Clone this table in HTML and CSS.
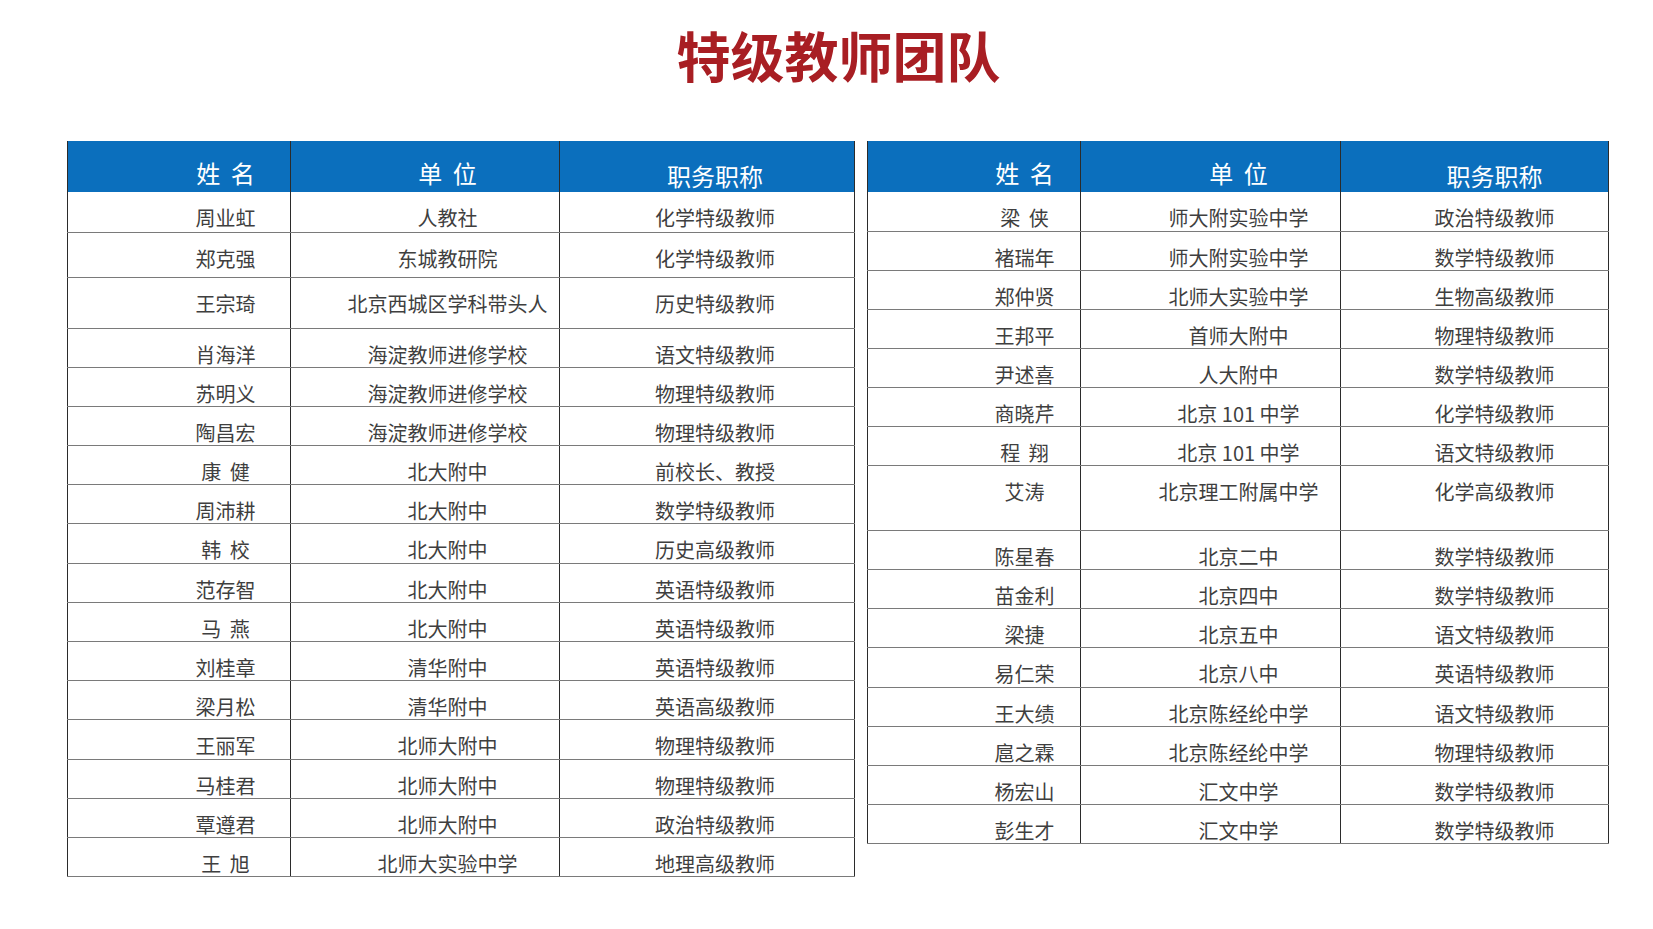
FILE: index.html
```html
<!DOCTYPE html>
<html lang="zh-CN">
<head>
<meta charset="utf-8">
<title>特级教师团队</title>
<link rel="stylesheet" href="styles.css">
</head>
<body>
<header class="title-wrap">
  <h1 class="title">特级教师团队</h1>
</header>
<main class="tables">
  <table class="team team-left">
    <colgroup><col class="w1"><col class="w2"><col class="w3"></colgroup>
    <thead>
      <tr><th class="c1">姓 名</th><th class="c2">单 位</th><th class="c3 hd-title">职务职称</th></tr>
    </thead>
    <tbody>
      <tr class="r40"><td class="c1">周业虹</td><td class="c2">人教社</td><td class="c3">化学特级教师</td></tr>
      <tr class="r45"><td class="c1">郑克强</td><td class="c2">东城教研院</td><td class="c3">化学特级教师</td></tr>
      <tr class="r51"><td class="c1">王宗琦</td><td class="c2">北京西城区学科带头人</td><td class="c3">历史特级教师</td></tr>
      <tr><td class="c1">肖海洋</td><td class="c2">海淀教师进修学校</td><td class="c3">语文特级教师</td></tr>
      <tr><td class="c1">苏明义</td><td class="c2">海淀教师进修学校</td><td class="c3">物理特级教师</td></tr>
      <tr><td class="c1">陶昌宏</td><td class="c2">海淀教师进修学校</td><td class="c3">物理特级教师</td></tr>
      <tr><td class="c1">康 健</td><td class="c2">北大附中</td><td class="c3">前校长、教授</td></tr>
      <tr><td class="c1">周沛耕</td><td class="c2">北大附中</td><td class="c3">数学特级教师</td></tr>
      <tr><td class="c1">韩 校</td><td class="c2">北大附中</td><td class="c3">历史高级教师</td></tr>
      <tr><td class="c1">范存智</td><td class="c2">北大附中</td><td class="c3">英语特级教师</td></tr>
      <tr><td class="c1">马 燕</td><td class="c2">北大附中</td><td class="c3">英语特级教师</td></tr>
      <tr><td class="c1">刘桂章</td><td class="c2">清华附中</td><td class="c3">英语特级教师</td></tr>
      <tr><td class="c1">梁月松</td><td class="c2">清华附中</td><td class="c3">英语高级教师</td></tr>
      <tr><td class="c1">王丽军</td><td class="c2">北师大附中</td><td class="c3">物理特级教师</td></tr>
      <tr><td class="c1">马桂君</td><td class="c2">北师大附中</td><td class="c3">物理特级教师</td></tr>
      <tr><td class="c1">覃遵君</td><td class="c2">北师大附中</td><td class="c3">政治特级教师</td></tr>
      <tr><td class="c1">王 旭</td><td class="c2">北师大实验中学</td><td class="c3">地理高级教师</td></tr>
    </tbody>
  </table>
  <table class="team team-right">
    <colgroup><col class="w1"><col class="w2"><col class="w3"></colgroup>
    <thead>
      <tr><th class="c1">姓 名</th><th class="c2">单 位</th><th class="c3 hd-title">职务职称</th></tr>
    </thead>
    <tbody>
      <tr><td class="c1">梁 侠</td><td class="c2">师大附实验中学</td><td class="c3">政治特级教师</td></tr>
      <tr><td class="c1">褚瑞年</td><td class="c2">师大附实验中学</td><td class="c3">数学特级教师</td></tr>
      <tr><td class="c1">郑仲贤</td><td class="c2">北师大实验中学</td><td class="c3">生物高级教师</td></tr>
      <tr><td class="c1">王邦平</td><td class="c2">首师大附中</td><td class="c3">物理特级教师</td></tr>
      <tr><td class="c1">尹述喜</td><td class="c2">人大附中</td><td class="c3">数学特级教师</td></tr>
      <tr><td class="c1">商晓芹</td><td class="c2 tight">北京 101 中学</td><td class="c3">化学特级教师</td></tr>
      <tr><td class="c1">程 翔</td><td class="c2 tight">北京 101 中学</td><td class="c3">语文特级教师</td></tr>
      <tr class="r65"><td class="c1">艾涛</td><td class="c2">北京理工附属中学</td><td class="c3">化学高级教师</td></tr>
      <tr><td class="c1">陈星春</td><td class="c2">北京二中</td><td class="c3">数学特级教师</td></tr>
      <tr><td class="c1">苗金利</td><td class="c2">北京四中</td><td class="c3">数学特级教师</td></tr>
      <tr><td class="c1">梁捷</td><td class="c2">北京五中</td><td class="c3">语文特级教师</td></tr>
      <tr><td class="c1">易仁荣</td><td class="c2">北京八中</td><td class="c3">英语特级教师</td></tr>
      <tr><td class="c1">王大绩</td><td class="c2">北京陈经纶中学</td><td class="c3">语文特级教师</td></tr>
      <tr><td class="c1">扈之霖</td><td class="c2">北京陈经纶中学</td><td class="c3">物理特级教师</td></tr>
      <tr><td class="c1">杨宏山</td><td class="c2">汇文中学</td><td class="c3">数学特级教师</td></tr>
      <tr><td class="c1">彭生才</td><td class="c2">汇文中学</td><td class="c3">数学特级教师</td></tr>
    </tbody>
  </table>
</main>
</body>
</html>
```

FILE: styles.css
```css
html, body {
  margin: 0;
  padding: 0;
  background: #ffffff;
}

body {
  width: 1653px;
  height: 929px;
  overflow: hidden;
  font-family: "Noto Sans CJK SC", "Noto Sans", sans-serif;
  color: #3f3f3f;
}

.title-wrap {
  display: flex;
  justify-content: center;
  padding: 27px 0 0 24px;
  height: 141px;
  box-sizing: border-box;
}

.title {
  margin: 0;
  font-size: 54px;
  line-height: 56px;
  font-weight: 700;
  color: #a81e23;
}

.tables {
  display: flex;
  align-items: flex-start;
  gap: 12px;
  padding-left: 67px;
}

.team {
  border-collapse: collapse;
  table-layout: fixed;
  border-left: 1px solid #333;
  border-right: 1px solid #555;
}

.team-left { width: 787px; }
.team-right { width: 741px; }

.team-left .w1 { width: 223px; }
.team-left .w2 { width: 269px; }
.team-left .w3 { width: 295px; }

.team-right .w1 { width: 213px; }
.team-right .w2 { width: 260px; }
.team-right .w3 { width: 268px; }

.team th {
  height: 51px;
  box-sizing: border-box;
  background: #0b6fbd;
  color: #ffffff;
  font-size: 24px;
  line-height: 24px;
  font-weight: 400;
  vertical-align: top;
  padding-top: 20px;
  padding-bottom: 0;
  border-left: 1px solid #2b2b2b;
  border-right: 1px solid #2b2b2b;
  word-spacing: 5px;
  white-space: nowrap;
}

.team th.hd-title {
  padding-top: 23px;
}

.team td {
  height: 39.2px;
  box-sizing: border-box;
  font-size: 20px;
  line-height: 20px;
  vertical-align: top;
  padding-top: 16px;
  padding-bottom: 0;
  border-left: 1px solid #2b2b2b;
  border-right: 1px solid #2b2b2b;
  border-bottom: 1px solid #7a7a7a;
  word-spacing: 4px;
  white-space: nowrap;
  text-align: center;
}

.team td.tight {
  word-spacing: 0;
}

.team-right td { height: 39.1px; }

.team tr.r40 td { height: 40px; }
.team tr.r45 td { height: 45px; }
.team tr.r51 td { height: 51px; }
.team tr.r65 td { height: 65px; }

.team-left .c1 { padding-left: 93px; padding-right: 0; }
.team-left .c2 { padding-left: 45px; padding-right: 0; }
.team-left .c3 { padding-left: 16px; padding-right: 0; }

.team-right .c1 { padding-left: 101px; padding-right: 0; }
.team-right .c2 { padding-left: 56px; padding-right: 0; }
.team-right .c3 { padding-left: 40px; padding-right: 0; }
```
